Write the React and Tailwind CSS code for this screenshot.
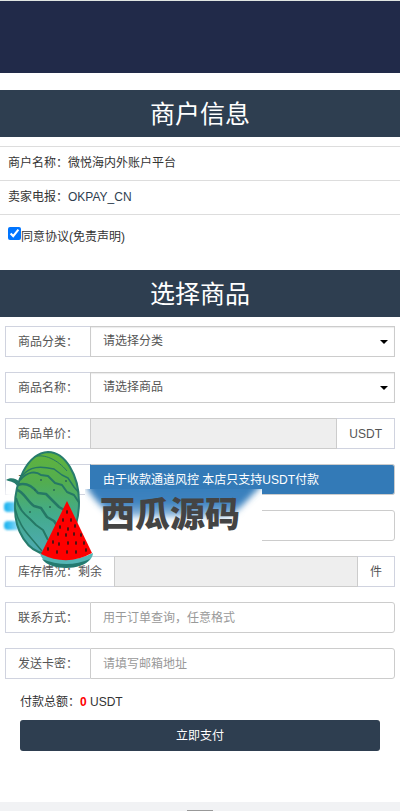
import React from "react";

const inputBase =
  "block h-[31px] min-w-0 flex-1 border border-[#ccc] px-3 text-xs text-[#555] placeholder:text-[#999] outline-none";

function Heading({ children }) {
  return (
    <h2 className="bg-[#2e3e50] pt-2 pb-[7px] text-center text-[25px] leading-8 text-white">
      {children}
    </h2>
  );
}

function Row({ id, label, suffix, children }) {
  return (
    <div className="flex h-[31px]">
      <label
        htmlFor={id}
        className="flex min-w-[85px] shrink-0 items-center border border-r-0 border-[#d0d3df] px-3 text-[#555]"
      >
        {label}
      </label>
      {children}
      {suffix && (
        <span className="flex items-center border border-l-0 border-[#d0d3df] px-3 text-[#555]">
          {suffix}
        </span>
      )}
    </div>
  );
}

function SelectRow({ id, label, option }) {
  return (
    <Row id={id} label={label}>
      <div className="relative flex min-w-0 flex-1">
        <select
          id={id}
          className="h-[31px] w-full appearance-none border border-[#ccc] bg-white px-3 pb-[2px] text-xs text-[#555] shadow-[inset_0_1px_1px_rgba(0,0,0,0.08)]"
        >
          <option>{option}</option>
        </select>
        <svg
          className="pointer-events-none absolute top-[14px] right-[7px] h-1 w-2"
          viewBox="0 0 8 4"
        >
          <path d="M0 0h8L4 4z" fill="#000" />
        </svg>
      </div>
    </Row>
  );
}

const seeds = [
  [67, 512], [63, 520], [71, 520], [60, 527], [68, 529], [75, 526],
  [58, 534], [66, 535], [74, 534], [81, 535], [53, 542], [59, 544],
  [68, 543], [76, 543], [84, 543], [48, 549], [57, 552], [67, 552],
  [76, 552], [86, 550],
];

function Watermark() {
  return (
    <div className="pointer-events-none absolute -top-[19px] left-0 h-[130px] w-[270px]">
      <svg className="block h-full w-full" viewBox="0 445 270 130" aria-hidden="true">
        <defs>
          <linearGradient id="rind" x1="0" y1="0" x2="0" y2="1">
            <stop offset="0" stopColor="#61b33c" />
            <stop offset="0.3" stopColor="#52ad50" />
            <stop offset="0.6" stopColor="#43ab8a" />
            <stop offset="1" stopColor="#4faab5" />
          </linearGradient>
          <linearGradient id="band" x1="0" y1="0" x2="0" y2="1">
            <stop offset="0" stopColor="#337ab7" />
            <stop offset="0.7" stopColor="#3d83c0" />
            <stop offset="1" stopColor="#9fc3e2" />
          </linearGradient>
          <filter id="soft" x="-20%" y="-20%" width="140%" height="140%">
            <feGaussianBlur stdDeviation="3" />
          </filter>
          <linearGradient id="cyan" x1="0" y1="0" x2="1" y2="0">
            <stop offset="0" stopColor="#12b0ee" />
            <stop offset="0.3" stopColor="#3fc0f2" />
            <stop offset="1" stopColor="#d5f1fc" />
          </linearGradient>
          <filter id="haze" x="-20%" y="-20%" width="140%" height="140%">
            <feGaussianBlur stdDeviation="1" />
          </filter>
          <clipPath id="panel">
            <rect x="85" y="489" width="177" height="67" />
          </clipPath>
          <clipPath id="melon">
            <path d="M48 452C65 452 79 475 79 502C79 529 66 554 46 554C27 552 15 530 15 509C14 484 27 453 48 452Z" />
          </clipPath>
        </defs>
        <rect x="4" y="497" width="82" height="55" fill="#fff" />
        <rect x="4" y="489" width="24" height="50" fill="#fff" filter="url(#soft)" />
        <g clipPath="url(#panel)">
          <rect x="85" y="489" width="177" height="67" fill="#fff" />
          <path d="M86 470H276L238 510Q232 517 222 517H116Q106 514 88 490Z" fill="url(#band)" filter="url(#soft)" />
        </g>
        <g fill="url(#cyan)" filter="url(#haze)">
          <rect x="4" y="502" width="20" height="10" rx="4" />
          <rect x="4" y="521" width="20" height="9" rx="4" />
        </g>
        <path d="M6 480C10 477 16 478 20 482L22 490L18 488C16 482 11 482 6 480Z" fill="#277c6d" />
        <path
          d="M48 452C65 452 79 475 79 502C79 529 66 554 46 554C27 552 15 530 15 509C14 484 27 453 48 452Z"
          fill="url(#rind)"
          stroke="#277c6d"
          strokeWidth="2"
        />
        <g clipPath="url(#melon)" fill="none" stroke="#257865" strokeLinejoin="round">
          <path d="M22 476C30 466 40 466 54 469L62 475L68 478L74 487L80 494" strokeWidth="1.5" />
          <path d="M20 480C28 471 36 471 41 475L48 476L55 483L62 485L67 492L74 495L80 504" strokeWidth="2" />
          <path d="M18 485C26 482 33 487 38 493L46 494L53 501L59 507L66 511L74 522" strokeWidth="2.5" />
          <path d="M17 490C24 492 27 501 34 506L41 508L47 517L54 521L60 530" strokeWidth="2.5" />
          <path d="M16 498C19 509 24 514 30 519L36 525L43 530L48 540" strokeWidth="2" />
          <path d="M15 508C18 522 24 530 31 538L42 551" strokeWidth="1.5" />
          <path d="M34 457C44 453 58 460 67 471" strokeWidth="1" />
        </g>
        <g fill="#286b55">
          <circle cx="35" cy="490" r="1" />
          <circle cx="41" cy="480" r="1" />
          <circle cx="54" cy="490" r="1" />
          <circle cx="50" cy="507" r="1" />
          <circle cx="30" cy="512" r="1" />
          <circle cx="66" cy="481" r="1" />
        </g>
        <path d="M40 553Q67 566 93 553C92 572 43 572 40 553Z" fill="#55b5b4" />
        <path d="M42 559Q67 569 90 559C82 571 50 571 42 559Z" fill="#247a70" />
        <path d="M67 501L92 553Q67 567 41 554Z" fill="#fe0000" />
        <g fill="#431414">
          {seeds.map(([x, y]) => (
            <ellipse key={`${x}-${y}`} cx={x} cy={y} rx="1" ry="2" />
          ))}
        </g>
      </svg>
      <span className="absolute top-[43px] left-[100px] font-['Noto_Sans_CJK_SC',sans-serif] text-[35px] leading-[48px] font-black whitespace-nowrap text-[#444]">
        西瓜源码
      </span>
    </div>
  );
}

export default function App() {
  return (
    <div className="flex min-h-screen flex-col bg-white font-['Liberation_Sans','Noto_Sans_CJK_SC',sans-serif] text-xs text-[#333]">
      <header className="h-[73px] border-t border-[#e0e5e2] bg-[#212a49]" />
      <main className="flex-1 pt-[17px] pb-[50px]">
        <Heading>商户信息</Heading>
        <section className="mt-[9px]">
          <p className="h-[34px] border-t border-[#ddd] px-2 leading-8">商户名称：微悦海内外账户平台</p>
          <p className="h-[35px] border-y border-[#ddd] px-2 leading-8">
            卖家电报：<a href="#seller" className="text-[#2e3e50]">OKPAY_CN</a>
          </p>
          <div className="flex h-[55px] items-start px-2 pt-3">
            <input id="agree" type="checkbox" defaultChecked className="h-[13px] w-[13px] accent-[#0075ff]" />
            <label htmlFor="agree" className="leading-5">同意协议(免责声明)</label>
          </div>
        </section>
        <Heading>选择商品</Heading>
        <form className="mt-[9px]">
          <div className="flex flex-col gap-[15px] px-[5px]">
            <SelectRow id="category" label="商品分类：" option="请选择分类" />
            <SelectRow id="product" label="商品名称：" option="请选择商品" />
            <Row id="price" label="商品单价：" suffix="USDT">
              <input id="price" readOnly className={`${inputBase} bg-[#eee]`} />
            </Row>
          </div>
          <div className="relative mt-[15px]">
            <div className="flex flex-col gap-[15px] px-[5px]">
              <Row id="payment" label="支付方式：">
                <button
                  id="payment"
                  type="button"
                  className="min-w-0 flex-1 rounded-r-[3px] border border-[#ccc] border-l-[#337ab7] bg-[#337ab7] px-3 text-left text-white"
                >
                  由于收款通道风控 本店只支持USDT付款
                </button>
              </Row>
              <Row id="quantity" label="">
                <input id="quantity" aria-label="数量" className={`${inputBase} rounded-r-[3px]`} />
              </Row>
            </div>
            <Watermark />
          </div>
          <div className="mt-[15px] flex flex-col gap-[15px] px-[5px]">
            <Row id="stock" label="库存情况：剩余" suffix="件">
              <input id="stock" readOnly className={`${inputBase} bg-[#eee]`} />
            </Row>
            <Row id="contact" label="联系方式：">
              <input id="contact" placeholder="用于订单查询，任意格式" className={`${inputBase} rounded-r-[3px]`} />
            </Row>
            <Row id="email" label="发送卡密：">
              <input id="email" placeholder="请填写邮箱地址" className={`${inputBase} rounded-r-[3px]`} />
            </Row>
          </div>
          <div className="px-5 pt-[13px]">
            <p className="leading-5">
              付款总额：<b className="text-[#f00]">0</b> USDT
            </p>
            <button type="submit" className="mt-2 h-[31px] w-full rounded-[3px] bg-[#2e3e50] text-white">
              立即支付
            </button>
          </div>
        </form>
      </main>
      <footer className="flex h-[9px] items-end justify-center bg-[#f1f2f4]">
        <div className="h-px w-[26px] bg-[#999]" />
      </footer>
    </div>
  );
}
